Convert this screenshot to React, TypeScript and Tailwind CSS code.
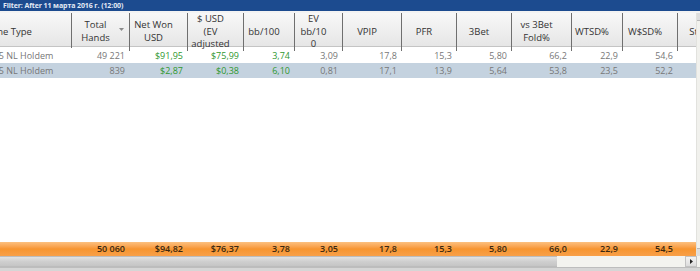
import React from 'react';

const cols =
  'grid grid-cols-[72px_58px_58px_56px_51px_48px_59px_55px_55px_60px_51px_55px_55px] w-[733px]';

const headers: string[] = [
  'Total\nHands',
  'Net Won\nUSD',
  '$ USD\n(EV\nadjusted',
  'bb/100',
  'EV\nbb/10\n0',
  'VPIP',
  'PFR',
  '3Bet',
  'vs 3Bet\nFold%',
  'WTSD%',
  'W$SD%',
  'Steal',
];

const green = new Set([1, 2, 3]);

const rows = [
  { game: '$0,25 NL Holdem', values: ['49 221', '$91,95', '$75,99', '3,74', '3,09', '17,8', '15,3', '5,80', '66,2', '22,9', '54,6', ''], selected: false },
  { game: '$0,25 NL Holdem', values: ['839', '$2,87', '$0,38', '6,10', '0,81', '17,1', '13,9', '5,64', '53,8', '23,5', '52,2', ''], selected: true },
];

const totals = ['50 060', '$94,82', '$76,37', '3,78', '3,05', '17,8', '15,3', '5,80', '66,0', '22,9', '54,5', ''];

function HeaderCell({ label, sorted }: { label: string; sorted?: boolean }) {
  return (
    <div className="relative flex items-center justify-center border-r border-[#6f6f6f] pr-[10px] text-center whitespace-pre leading-[12.5px]">
      {label}
      {sorted && (
        <svg className="absolute right-[5px] top-[15px]" width="5" height="3" viewBox="0 0 5 3">
          <path d="M0 0h5L2.5 3z" fill="#8a8a8a" />
        </svg>
      )}
    </div>
  );
}

export default function App() {
  return (
    <div className="w-[700px] h-[271px] flex flex-col overflow-hidden bg-white font-['Open_Sans',sans-serif]">
      {/* Filter bar */}
      <div className="h-[11px] bg-[#1c4b8f] pl-[3px] text-[7px] font-bold leading-[11px] tracking-[-0.1px] text-[#e3eaf5] whitespace-nowrap">
        Filter: After 11 марта 2016 г. (12:00)
      </div>
      <div className="h-[2px] bg-[#f3f3f3]" />

      <div className="flex flex-1 min-h-0">
        <div className="flex-1 min-w-0 flex flex-col overflow-hidden">
          {/* Header */}
          <div className={`${cols} h-[34px] shrink-0 border-b border-[#c4c4c4] bg-linear-to-b from-[#f8f8f8] to-[#e6e6e6] text-[9.5px] text-[#333]`}>
            <div className="flex items-center border-r border-[#6f6f6f] overflow-hidden whitespace-nowrap">
              <span className="-ml-[18px]">Game Type</span>
            </div>
            {headers.map((h, i) => (
              <HeaderCell key={i} label={h} sorted={i === 0} />
            ))}
          </div>

          <div className="h-px shrink-0" />

          {/* Rows */}
          {rows.map((r, ri) => (
            <div
              key={ri}
              className={`${cols} h-[15px] shrink-0 items-center text-[9px] text-[#777] ${r.selected ? 'bg-[#c4d2df]' : 'bg-white'}`}
            >
              <div className="overflow-hidden whitespace-nowrap">
                <span className="-ml-[19px]">{r.game}</span>
              </div>
              {r.values.map((v, i) => (
                <div key={i} className={`pr-[5px] text-right ${green.has(i) ? 'text-[#2f982f]' : ''}`}>
                  {v}
                </div>
              ))}
            </div>
          ))}

          <div className="flex-1" />

          {/* Totals */}
          <div className={`${cols} h-[14px] shrink-0 items-center bg-linear-to-b from-[#fcc07e] via-[#f7952f] to-[#f8a048] text-[9px] font-semibold text-[#3a2810]`}>
            <div />
            {totals.map((v, i) => (
              <div key={i} className="pr-[5px] text-right">
                {v}
              </div>
            ))}
          </div>
        </div>

        {/* Vertical scrollbar */}
        <div className="w-[4px] flex flex-col justify-between bg-[#f1f1ed] border-l border-[#e2e2de]">
          <div className="h-[8px] bg-[#dedede] border-b border-[#b8b8b8]" />
          <div className="h-[8px] bg-[#dedede] border-t border-[#b8b8b8]" />
        </div>
      </div>

      {/* Horizontal scrollbar */}
      <div className="h-[11px] flex bg-[#f3f3ef]">
        <div className="w-[557px] bg-linear-to-b from-[#e2e2e2] via-[#cfcfcf] to-[#c5c5c5] border-y border-[#bcbcbc]" />
        <div className="flex-1" />
        <div className="w-[12px] mr-[3px] flex items-center justify-center bg-linear-to-b from-[#f4f4f4] to-[#dcdcdc] border border-[#c2c2c2]">
          <svg width="3" height="5" viewBox="0 0 3 5">
            <path d="M0 0l3 2.5L0 5z" fill="#222" />
          </svg>
        </div>
      </div>
      <div className="h-[4px] bg-[#d6d6d6] border-t border-[#bdbdbd]" />
    </div>
  );
}
